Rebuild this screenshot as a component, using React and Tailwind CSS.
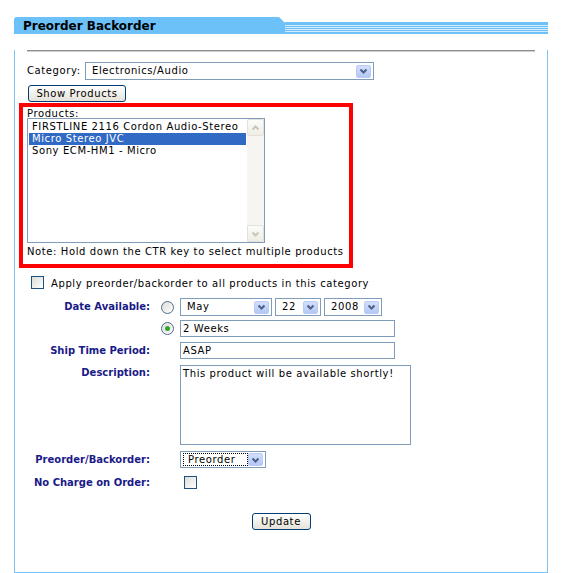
import React from "react";

function Chevron({ up = false, color = "#4d6185" }) {
  return (
    <svg width="9" height="6" viewBox="0 0 9 6">
      <path
        d={up ? "M1.5 4.5 L4.5 1.5 L7.5 4.5" : "M1.5 1.5 L4.5 4.5 L7.5 1.5"}
        fill="none"
        stroke={color}
        strokeWidth="2"
      />
    </svg>
  );
}

function DropButton() {
  return (
    <div className="mr-[2px] flex h-[13px] w-[15px] shrink-0 items-center justify-center rounded-[2px] border border-[#b9cbf5] bg-linear-to-b from-[#d4e0fc] to-[#b3c8f6]">
      <Chevron />
    </div>
  );
}

function XpSelect({ value, className, focus }) {
  return (
    <div className={"flex items-center border border-[#7f9db9] bg-white " + className}>
      <div className="flex min-w-0 flex-1 items-center pl-[2px]">
        <span
          className={
            "flex h-[13px] flex-1 items-center pl-[4px] " +
            (focus ? "border border-dotted border-black" : "")
          }
        >
          {value}
        </span>
      </div>
      <DropButton />
    </div>
  );
}

function XpButton({ children, className }) {
  return (
    <div
      className={
        "flex items-center justify-center rounded-[3px] border border-[#003c74] bg-linear-to-b from-white to-[#e4e2d8] " +
        className
      }
    >
      {children}
    </div>
  );
}

function Checkbox({ className = "" }) {
  return (
    <div
      className={
        "h-[13px] w-[13px] shrink-0 border border-[#1c5180] bg-linear-to-br from-[#dcdcd7] to-white " +
        className
      }
    />
  );
}

function Radio({ checked }) {
  return (
    <div className="flex h-[13px] w-[13px] items-center justify-center rounded-full border border-[#4f6e8e] bg-linear-to-br from-[#dcdcd7] to-white">
      {checked ? <div className="h-[5px] w-[5px] rounded-full bg-[#2fa72f]" /> : null}
    </div>
  );
}

function Label({ children, top }) {
  return (
    <div
      className={
        "w-[135px] shrink-0 text-right font-bold tracking-normal text-[#1a1a88] " +
        (top ? "pt-[2px]" : "")
      }
    >
      {children}
    </div>
  );
}

const products = [
  "FIRSTLINE 2116 Cordon Audio-Stereo",
  "Micro Stereo JVC",
  "Sony ECM-HM1 - Micro",
];

export default function App() {
  return (
    <div className="h-[573px] w-[567px] bg-white pl-[14px] pt-[17px] font-['DejaVu_Sans',Verdana,sans-serif] text-[10px] leading-[12px] tracking-[0.6px] text-black">
      <div className="w-[534px]">
        {/* Header tab */}
        <div className="flex h-[17px]">
          <div className="flex w-[271px] items-center rounded-tl-[3px] bg-[#6cc1f9] pl-[9px] pt-[1px] text-[12px] font-bold tracking-normal [clip-path:polygon(0_0,265px_0,271px_6px,271px_100%,0_100%)]">
            Preorder Backorder
          </div>
          <div className="mt-[5px] flex flex-1 flex-col bg-[#6cc1f9]">
            <div className="h-[3px]" />
            <div className="h-[1px] bg-[#d2ebfc]" />
            <div className="h-[1px]" />
            <div className="h-[1px] bg-[#d2ebfc]" />
            <div className="h-[1px]" />
            <div className="h-[1px] bg-[#d2ebfc]" />
            <div className="h-[1px]" />
            <div className="h-[1px] bg-[#d2ebfc]" />
          </div>
        </div>

        {/* Body */}
        <div className="h-[523px] border-x border-b border-[#7dc3f3]">
          <div className="mx-[12px] mt-[16px] h-[2px] border-t border-[#8e8e8e] bg-[#cfcfcf]" />

          <div className="ml-[12px] mt-[10px] flex h-[18px] items-center">
            <div className="w-[58px]">Category:</div>
            <XpSelect value="Electronics/Audio" className="h-[18px] w-[289px]" />
          </div>

          <XpButton className="ml-[13px] mt-[5px] h-[17px] w-[98px]">Show Products</XpButton>

          {/* Products (highlighted) */}
          <div className="ml-[4px] mt-[1px] h-[165px] w-[334px] border-4 border-[#ff0000] pl-[4px]">
            <div className="h-[11px] pt-[1px]">Products:</div>
            <div className="flex h-[125px] w-[238px] border border-[#7f9db9]">
              <div className="flex-1 px-[1px] pt-[2px]">
                {products.map((p, i) => (
                  <div
                    key={p}
                    className={
                      "h-[12px] pl-[3px] " + (i === 1 ? "bg-[#316ac5] text-white" : "")
                    }
                  >
                    {p}
                  </div>
                ))}
              </div>
              <div className="flex w-[17px] flex-col justify-between bg-[#f6f5f1]">
                <div className="flex h-[17px] items-center justify-center rounded-[2px] border border-[#e3e1d9] bg-linear-to-b from-[#fbfbf8] to-[#eeede6]">
                  <Chevron up color="#c8c6b8" />
                </div>
                <div className="flex h-[17px] items-center justify-center rounded-[2px] border border-[#e3e1d9] bg-linear-to-b from-[#fbfbf8] to-[#eeede6]">
                  <Chevron color="#c8c6b8" />
                </div>
              </div>
            </div>
            <div className="mt-[3px] whitespace-nowrap">
              Note: Hold down the CTR key to select multiple products
            </div>
          </div>

          <div className="ml-[16px] mt-[8px] flex h-[13px] items-center">
            <Checkbox />
            <div className="ml-[7px] mt-[3px]">
              Apply preorder/backorder to all products in this category
            </div>
          </div>

          {/* Form rows */}
          <div className="mt-[9px] flex h-[18px] items-center">
            <Label>Date Available:</Label>
            <div className="w-[30px] pl-[11px]">
              <Radio />
            </div>
            <XpSelect value="May" className="h-[18px] w-[92px]" />
            <XpSelect value="22" className="ml-[3px] h-[18px] w-[46px]" />
            <XpSelect value="2008" className="ml-[3px] h-[18px] w-[58px]" />
          </div>

          <div className="mt-[4px] flex h-[17px] items-center">
            <div className="w-[135px]" />
            <div className="w-[30px] pl-[11px]">
              <Radio checked />
            </div>
            <div className="flex h-[17px] w-[215px] items-center border border-[#7f9db9] pl-[2px]">
              2 Weeks
            </div>
          </div>

          <div className="mt-[5px] flex h-[17px] items-center">
            <Label>Ship Time Period:</Label>
            <div className="w-[30px]" />
            <div className="flex h-[17px] w-[215px] items-center border border-[#7f9db9] pl-[2px]">
              ASAP
            </div>
          </div>

          <div className="mt-[6px] flex items-start">
            <Label top>Description:</Label>
            <div className="w-[30px]" />
            <div className="h-[80px] w-[231px] border border-[#7f9db9] pl-[2px] pt-[2px]">
              This product will be available shortly!
            </div>
          </div>

          <div className="mt-[6px] flex h-[17px] items-center">
            <Label>Preorder/Backorder:</Label>
            <div className="w-[30px]" />
            <XpSelect value="Preorder" focus className="h-[17px] w-[86px]" />
          </div>

          <div className="mt-[8px] flex h-[13px] items-center">
            <Label>No Charge on Order:</Label>
            <div className="w-[34px]" />
            <Checkbox />
          </div>

          <div className="mt-[24px] flex justify-center">
            <XpButton className="h-[17px] w-[59px]">Update</XpButton>
          </div>
        </div>
      </div>
    </div>
  );
}
